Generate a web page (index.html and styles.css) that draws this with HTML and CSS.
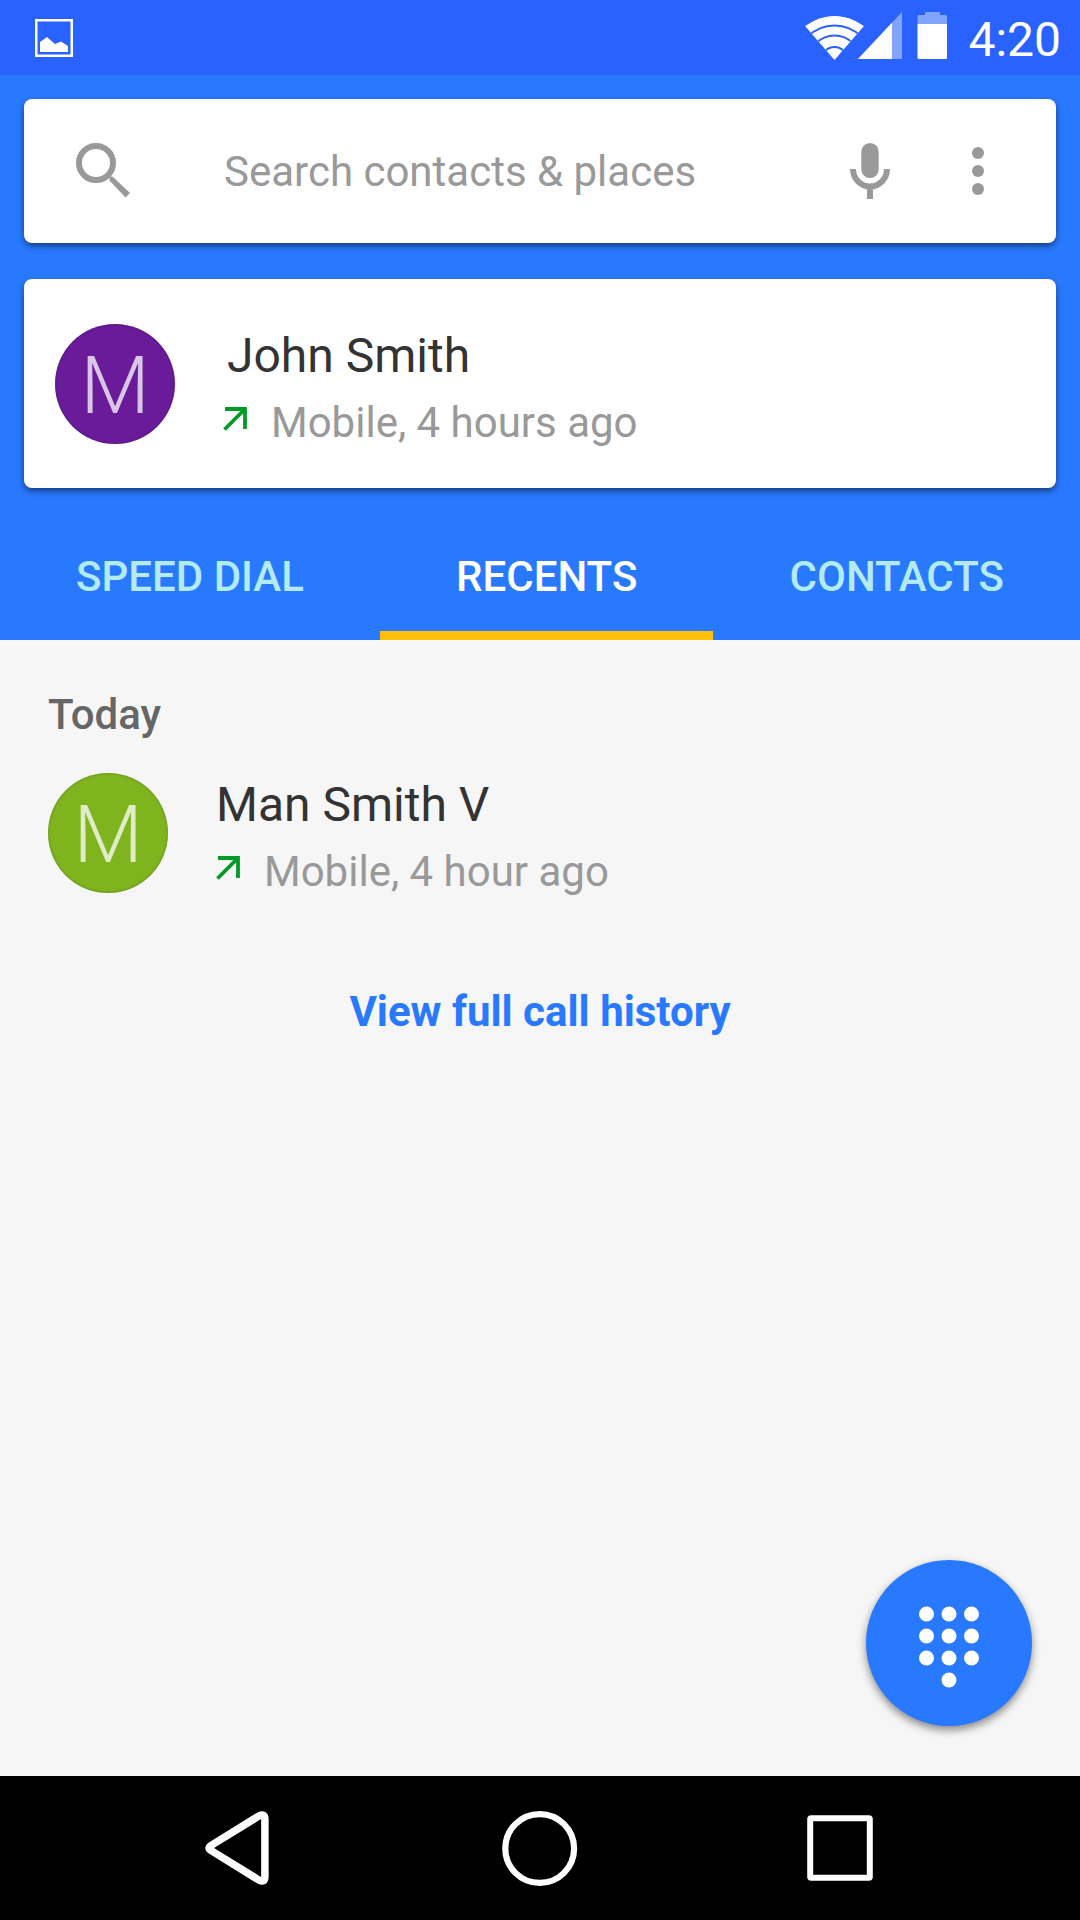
FILE: index.html
```html
<!DOCTYPE html>
<html lang="en">
<head>
<meta charset="utf-8">
<meta name="viewport" content="width=device-width, initial-scale=1">
<title>Phone</title>
<link rel="stylesheet" href="styles.css">
</head>
<body>
<div class="screen">
  <div class="status-bar">
    <svg class="status-picture" width="38" height="38" viewBox="0 0 38 38" aria-hidden="true">
      <rect x="1.25" y="1.25" width="35.5" height="35.5" fill="none" stroke="#fff" stroke-width="2.5"/>
      <path d="M5 33V23l7-5 8 7 6-2.500 7 4.500v6z" fill="#fff"/>
    </svg>
    <div class="status-icons">
      <svg width="142" height="48" viewBox="0 0 142 48" aria-hidden="true">
        <clipPath id="wifi-fan"><path d="M0 14Q29.500-7 59 14L29.500 48z"/></clipPath>
        <g clip-path="url(#wifi-fan)">
          <circle cx="29.500" cy="53" r="49" fill="#fff"/>
          <g fill="none" stroke="#2962ff" stroke-width="1.800">
            <circle cx="29.500" cy="51" r="37.500"/>
            <circle cx="29.500" cy="49" r="25.500"/>
            <circle cx="29.500" cy="48" r="13"/>
          </g>
        </g>
        <path d="M97 0v47H53z" fill="#fff" opacity=".42"/>
        <path d="M87 10.700V47H53z" fill="#fff"/>
        <path d="M112.500 12V4.500q0-1.500 1.500-1.500h6V0h15v3h5.500q1.500 0 1.500 1.500V12z" fill="#fff" opacity=".42"/>
        <path d="M112.500 12H142v33.500q0 1.500-1.500 1.500H114q-1.500 0-1.500-1.500z" fill="#fff"/>
      </svg>
      <time class="clock">4:20</time>
    </div>
  </div>

  <header class="header">
    <form class="card search" role="search">
      <label class="icon-box" for="search" aria-label="Search">
        <svg width="72" height="72" viewBox="0 0 72 72" aria-hidden="true">
          <circle cx="30" cy="28" r="17" fill="none" stroke="#999" stroke-width="6"/>
          <path d="M46.500 41.500l17.500 16.500-4.500 4.500-16-17v-4z" fill="#999"/>
        </svg>
      </label>
      <input class="search-input" id="search" type="text" placeholder="Search contacts &amp; places">
      <button class="icon-box" type="button" aria-label="Voice search">
        <svg width="72" height="72" viewBox="0 0 72 72" aria-hidden="true">
          <rect x="27.300" y="8" width="17.400" height="35" rx="8.700" fill="#999"/>
          <path d="M19 34a17 17.500 0 0 0 34 0M36 52v12" fill="none" stroke="#999" stroke-width="6"/>
        </svg>
      </button>
      <button class="icon-box" type="button" aria-label="More options">
        <svg width="72" height="72" viewBox="0 0 72 72" fill="#999" aria-hidden="true">
          <circle cx="36" cy="18" r="6"/><circle cx="36" cy="36" r="6"/><circle cx="36" cy="54" r="6"/>
        </svg>
      </button>
    </form>

    <article class="card last-call call">
      <div class="avatar avatar-purple">M</div>
      <div class="call-text">
        <h2 class="name">John Smith</h2>
        <p class="detail">
          <svg class="outgoing" width="24" height="24" viewBox="0 0 24 24" aria-hidden="true"><path d="M2 2H22V22M21.500 2.500L1.500 22.500" fill="none" stroke="#009a25" stroke-width="3.800"/></svg>
          Mobile, 4 hours ago
        </p>
      </div>
    </article>

    <nav class="tabs">
      <a class="tab" href="#speed-dial">SPEED DIAL</a>
      <a class="tab tab-active" href="#recents" aria-current="page">RECENTS</a>
      <a class="tab" href="#contacts">CONTACTS</a>
    </nav>
  </header>

  <main class="recents" id="recents">
    <h1 class="day">Today</h1>
    <article class="call">
      <div class="avatar avatar-green">M</div>
      <div class="call-text">
        <h2 class="name">Man Smith V</h2>
        <p class="detail">
          <svg class="outgoing" width="24" height="24" viewBox="0 0 24 24" aria-hidden="true"><path d="M2 2H22V22M21.500 2.500L1.500 22.500" fill="none" stroke="#009a25" stroke-width="3.800"/></svg>
          Mobile, 4 hour ago
        </p>
      </div>
    </article>
    <a class="history" href="#history">View full call history</a>
    <button class="dialpad" type="button" aria-label="Dial pad">
      <svg width="60" height="90" viewBox="0 -8 60 90" fill="#fff" aria-hidden="true">
        <circle cx="7.500" cy="8" r="7.500"/><circle cx="30" cy="8" r="7.500"/><circle cx="52.500" cy="8" r="7.500"/>
        <circle cx="7.500" cy="30" r="7.500"/><circle cx="30" cy="30" r="7.500"/><circle cx="52.500" cy="30" r="7.500"/>
        <circle cx="7.500" cy="52" r="7.500"/><circle cx="30" cy="52" r="7.500"/><circle cx="52.500" cy="52" r="7.500"/>
        <circle cx="30" cy="74" r="7.500"/>
      </svg>
    </button>
  </main>

  <footer class="nav-bar">
    <button class="nav-button" type="button" aria-label="Back">
      <svg width="76" height="76" viewBox="0 0 76 76" aria-hidden="true"><path d="M9.200 35.400L57 5.900Q62.900 2.800 62.900 9.200V66.800Q62.900 73.200 57 70.100L9.200 40.600Q4.900 38 9.200 35.400z" fill="none" stroke="#fff" stroke-width="7.500"/></svg>
    </button>
    <button class="nav-button" type="button" aria-label="Home">
      <svg width="76" height="76" viewBox="0 0 76 76" aria-hidden="true"><circle cx="37.700" cy="38.500" r="34.400" fill="none" stroke="#fff" stroke-width="6.200"/></svg>
    </button>
    <button class="nav-button" type="button" aria-label="Overview">
      <svg width="76" height="76" viewBox="0 0 76 76" aria-hidden="true"><rect x="8.200" y="8.200" width="59.600" height="59.600" rx="1" fill="none" stroke="#fff" stroke-width="6"/></svg>
    </button>
  </footer>
</div>
</body>
</html>
```
FILE: styles.css
```css
* {
  box-sizing: border-box;
}

body {
  margin: 0;
  background: #f6f6f6;
  color: #333;
  font-family: Roboto, "Noto Sans", sans-serif;
  font-size: 42px;
  line-height: 48px;
}

h1, h2, p {
  margin: 0;
  font-weight: 400;
}

a {
  text-decoration: none;
}

svg {
  display: block;
  flex: none;
}

button {
  padding: 0;
  border: 0;
  background: none;
  cursor: pointer;
}

.screen {
  display: flex;
  flex-direction: column;
  min-height: 100vh;
}

/* System status bar */
.status-bar {
  display: flex;
  align-items: flex-start;
  justify-content: space-between;
  height: 75px;
  padding: 12px 19px 0 35px;
  background: #2962ff;
  color: #fff;
}

.status-picture {
  margin-top: 7px;
}

.status-icons {
  display: flex;
  align-items: flex-start;
  gap: 21px;
}

.clock {
  font-size: 48px;
  line-height: 56px;
}

/* Header */
.header {
  padding-top: 24px;
  background: #2979ff;
}

.card {
  margin: 0 24px;
  border-radius: 8px;
  background: #fff;
  box-shadow: 0 3px 6px rgba(0, 0, 0, .5);
}

.search {
  display: flex;
  align-items: center;
  height: 144px;
  padding: 0 24px;
}

.icon-box {
  display: flex;
  flex: none;
  align-items: center;
  justify-content: center;
  width: 108px;
  height: 108px;
}

.search-input {
  flex: 1;
  min-width: 0;
  height: 108px;
  padding: 0 0 0 68px;
  border: 0;
  outline: 0;
  background: none;
  color: #333;
  font: inherit;
}

.search-input::placeholder {
  color: #999;
  opacity: 1;
}

.call {
  display: flex;
  align-items: flex-start;
}

.last-call {
  margin-top: 36px;
  padding: 45px 31px 41px;
}

.last-call .name {
  padding-left: 4px;
}

.avatar {
  flex: none;
  width: 120px;
  height: 120px;
  border-radius: 50%;
  color: rgba(255, 255, 255, .75);
  font-size: 80px;
  font-weight: 300;
  line-height: 124px;
  text-align: center;
}

.avatar-purple {
  background: #6a1b9a;
  box-shadow: inset 0 0 3px rgba(0, 0, 0, .3);
}

.avatar-green {
  background: #7fb41f;
  box-shadow: inset 0 0 3px rgba(0, 0, 0, .3);
}

.call-text {
  display: flex;
  flex-direction: column;
  gap: 11px;
  padding-left: 48px;
}

.name {
  font-size: 48px;
  line-height: 64px;
}

.detail {
  display: flex;
  align-items: flex-start;
  gap: 24px;
  color: #999;
}

.outgoing {
  margin-top: 8px;
}

.tabs {
  display: flex;
  margin-top: 24px;
}

.tab {
  display: flex;
  flex: 1 1 auto;
  align-items: center;
  justify-content: center;
  height: 128px;
  padding-top: 2px;
  color: #b2ebf2;
  font-weight: 500;
}

.tab-active {
  color: #fff;
  box-shadow: inset 0 -9px #ffc107;
}

/* Recent calls */
.recents {
  position: relative;
  display: flex;
  flex: 1;
  flex-direction: column;
  padding: 51px 48px;
}

.day {
  margin-bottom: 34px;
  color: #666;
  font-size: 42px;
  font-weight: 500;
}

.history {
  align-self: center;
  margin-top: 92px;
  color: #2979ff;
  font-weight: 700;
}

.dialpad {
  position: absolute;
  right: 48px;
  bottom: 50px;
  display: flex;
  align-items: center;
  justify-content: center;
  width: 166px;
  height: 166px;
  border-radius: 50%;
  background: #2979ff;
  box-shadow: 0 4px 8px rgba(0, 0, 0, .45);
}

/* System navigation bar */
.nav-bar {
  display: flex;
  height: 144px;
  padding: 0 90px;
  background: #000;
}

.nav-button {
  display: flex;
  flex: 1;
  align-items: center;
  justify-content: center;
}
```
